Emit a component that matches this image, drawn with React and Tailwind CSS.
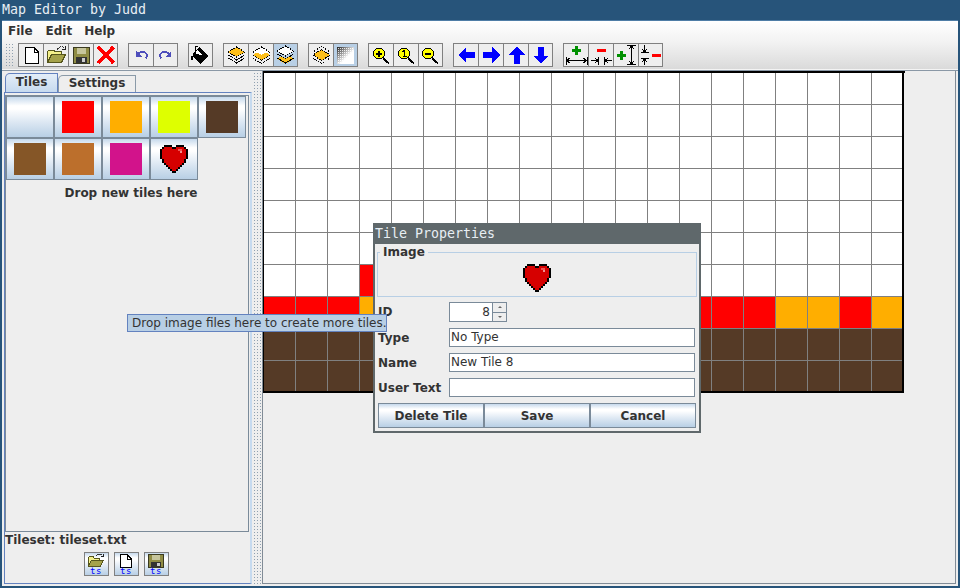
import React from "react";

const HEART = [
  "..KKKK..KKKK..",
  ".KRRRRKKRRRRK.",
  "KRRRRRRRRHHRRK",
  "KRRRRRRRRRPRRK",
  "KRRRRRRRRRRRRK",
  "KRRRRRRRRRRRRK",
  "KRRRRRRRRRRRRK",
  ".KRRRRRRRRRRK.",
  ".KRRRRRRRRRRK.",
  "..KRRRRRRRRK..",
  "...KRRRRRRK...",
  "....KRRRRK....",
  ".....KRRK.....",
  "......KK......",
];
const HC = { K: "#000", R: "#d60000", H: "#ee5555", P: "#f09090" };

function Heart() {
  return (
    <svg width="28" height="28" viewBox="0 0 14 14" shapeRendering="crispEdges" className="block">
      {HEART.flatMap((row, y) =>
        row.split("").map((c, x) => (c === "." ? null : <rect key={x + "-" + y} x={x} y={y} width="1" height="1" fill={HC[c]} />))
      )}
    </svg>
  );
}

const S = ({ children }) => (
  <svg width="23" height="22" viewBox="0 0 23 22" className="block" shapeRendering="crispEdges">
    {children}
  </svg>
);

const IconNew = () => (
  <S>
    <path d="M5.5 3.5H14L18.5 8V19.5H5.5Z" fill="#fff" stroke="#000" />
    <path d="M14 3.5V8H18.5" fill="none" stroke="#000" />
  </S>
);
const IconOpen = () => (
  <S>
    <path d="M2.5 18.5V7.5L4 6H9L10 7.5H16V10" fill="#f4f08a" stroke="#55551c" />
    <path d="M2.5 18.5L6.5 10.5H20.5L16.5 18.5Z" fill="#a5a24a" stroke="#55551c" />
    <path d="M12 5.5Q15 1.5 19 3.5" fill="none" stroke="#333" strokeDasharray="2 1" />
    <path d="M17 5.5H20.5V2" fill="none" stroke="#222" />
  </S>
);
const IconSave = () => (
  <S>
    <rect x="3.5" y="3.5" width="16" height="16" fill="#8f8c45" stroke="#3a3a20" />
    <rect x="7" y="4" width="9" height="6" fill="#c6c59c" />
    <rect x="6" y="13" width="11" height="6" fill="#333" />
    <rect x="12" y="14" width="3" height="4" fill="#ccc" />
  </S>
);
const IconX = () => (
  <S>
    <path d="M4 3L19.5 19M19.5 3L4 19" stroke="#f00" strokeWidth="3.6" />
  </S>
);
const IconUndo = () => (
  <S>
    <path d="M7 10.5Q11 6.5 15 8.5Q19 11 15.5 14.5" fill="none" stroke="#4d4dbb" strokeWidth="1.8" />
    <path d="M6 7V13H12Z" fill="#4d4dbb" />
  </S>
);
const IconRedo = () => (
  <S>
    <path d="M16 10.5Q12 6.5 8 8.5Q4 11 7.5 14.5" fill="none" stroke="#4d4dbb" strokeWidth="1.8" />
    <path d="M17 7V13H11Z" fill="#4d4dbb" />
  </S>
);
const IconBucket = () => (
  <S>
    <path d="M9 3Q7 1.5 6 3V9" fill="none" stroke="#000" strokeWidth="1" />
    <path d="M10 3L20 12L11 20L4 13V9Z" fill="#000" />
    <path d="M8 6L6.5 10L14 11Z" fill="#fff" />
    <path d="M3 11Q1 15 3 17Q5 15 3 11Z" fill="#000" />
  </S>
);
const Chev = ({ y, fill }) => (
  <path d={`M3 ${y}L11.5 ${y + 5}L20 ${y}L16 ${y - 2.5}L11.5 ${y}L7 ${y - 2.5}Z`} fill={fill} stroke="none" />
);
const LayerTop = () => (
  <S>
    <path d="M3 14L11.5 19L20 14M3 11L11.5 16L20 11" fill="none" stroke="#000" strokeWidth="1" strokeDasharray="1.6 .8" />
    <path d="M11.5 3L20 8L11.5 13L3 8Z" fill="#fdbf1a" stroke="#000" strokeDasharray="1.6 .8" />
  </S>
);
const LayerMid = () => (
  <S>
    <path d="M11.5 3L20 8L11.5 13L3 8Z" fill="#fff" stroke="#000" strokeDasharray="1.6 .8" />
    <path d="M3 11L11.5 16L20 11" fill="none" stroke="#000" />
    <Chev y={11} fill="#fdbf1a" />
    <path d="M3 14.5L11.5 19.5L20 14.5" fill="none" stroke="#000" strokeDasharray="1.6 .8" />
  </S>
);
const LayerBot = () => (
  <S>
    <path d="M11.5 2L20 7L11.5 12L3 7Z" fill="#fff" stroke="#000" strokeDasharray="1.6 .8" />
    <path d="M3 10L11.5 15L20 10" fill="none" stroke="#000" strokeDasharray="1.6 .8" />
    <Chev y={15} fill="#fdbf1a" />
    <path d="M3 14L11.5 19L20 14" fill="none" stroke="#000" />
  </S>
);
const LayerOne = () => (
  <S>
    <path d="M11.5 2.5L20 8M11.5 2.5L3 8M3 14L11.5 19.5L20 14" fill="none" stroke="#000" strokeDasharray="1 1" />
    <path d="M11.5 5.5L20 11L11.5 16.5L3 11Z" fill="#fdbf1a" stroke="#000" strokeDasharray="1.4 1" />
  </S>
);
const IconGrid = () => {
  const cells = [];
  for (let y = 0; y < 8; y++)
    for (let x = 0; x < 8; x++) {
      const g = Math.min(255, 215 + (x + y) * 6);
      cells.push(<rect key={x + "," + y} x={4 + x * 2} y={4 + y * 2} width="1" height="1" fill={`rgb(${g},${g},${g})`} />);
    }
  return (
    <S>
      <defs>
        <linearGradient id="gridfade" x1="0" y1="0" x2="1" y2="1">
          <stop offset="0" stopColor="#222222" />
          <stop offset="0.6" stopColor="#ffffff" />
          <stop offset="1" stopColor="#ffffff" />
        </linearGradient>
      </defs>
      <rect x="3" y="3" width="17" height="17" fill="url(#gridfade)" />
      {cells}
    </S>
  );
};
const Zoom = ({ mark }) => (
  <S>
    <path d="M13 14L19 19.5" stroke="#000" strokeWidth="2" />
    <circle cx="9" cy="9.5" r="5.5" fill="#ffff00" stroke="#000" strokeWidth="1" />
    {mark === "+" && <path d="M6 9.5H12M9 6.5V12.5" stroke="#000" strokeWidth="2" />}
    {mark === "-" && <path d="M6 9.5H12" stroke="#000" strokeWidth="2" />}
    {mark === "1" && <path d="M7.5 7.5L9.5 6.5V12.5M7.5 12.5H11.5" stroke="#000" strokeWidth="1.4" fill="none" />}
  </S>
);
const Arrow = ({ d }) => {
  const rot = { l: 0, r: 180, u: 90, d: 270 }[d];
  return (
    <S>
      <path transform={`rotate(${rot} 11.5 11)`} d="M3 11L11 3V8H20V14H11V19Z" fill="#0000ff" />
    </S>
  );
};
const Plus = ({ x, y, c = "#009000" }) => <path d={`M${x - 4.5} ${y}H${x + 4.5}M${x} ${y - 4.5}V${y + 4.5}`} stroke={c} strokeWidth="3" />;
const Minus = ({ x, y }) => <path d={`M${x - 4.5} ${y}H${x + 4.5}`} stroke="#f00" strokeWidth="3" />;
const WidenPlus = () => (
  <S>
    <Plus x={11.5} y={6} />
    <path d="M1 12.5V21M22 12.5V21M1.5 16.5H21.5M5 14L1.5 16.5L5 19M18 14L21.5 16.5L18 19" fill="none" stroke="#000" />
  </S>
);
const WidenMinus = () => (
  <S>
    <Minus x={11.5} y={6} />
    <path d="M8.5 12.5V21M14.5 12.5V21M1 16.5H8M8 16.5L5 14M8 16.5L5 19M15 16.5H22M15 16.5L18 14M15 16.5L18 19" fill="none" stroke="#000" />
  </S>
);
const TallPlus = () => (
  <S>
    <Plus x={6} y={11} />
    <path d="M12 1.5H21M12 20.5H21M16.5 2V20M14 5L16.5 2L19 5M14 17L16.5 20L19 17" fill="none" stroke="#000" />
  </S>
);
const TallMinus = () => (
  <S>
    <Minus x={17.5} y={11} />
    <path d="M1.5 8.5H10M1.5 14.5H10M5.5 1V8M5.5 8L3 5M5.5 8L8 5M5.5 15V21M5.5 15L3 18M5.5 15L8 18" fill="none" stroke="#000" />
  </S>
);

function Group({ items, mr }) {
  return (
    <div className={`flex ${mr}`}>
      {items.map((it, i) => (
        <div
          key={i}
          className={`h-[24px] w-[25px] flex items-center justify-center border-y border-l border-[#808080] box-border ${
            i === items.length - 1 ? "border-r" : ""
          } ${it.on ? "bg-[#b8cfe5]" : "bg-[#eeeeee]"}`}
        >
          {it.i}
        </div>
      ))}
    </div>
  );
}

const BTN = "bg-[linear-gradient(180deg,#c6d9ec_0%,#ffffff_22%,#ffffff_30%,#dde8f3_62%,#b8cfe5_100%)]";

function Tile({ c, children }) {
  return (
    <div className={`w-[48px] h-[42px] box-border border border-[#7a8a99] flex items-center justify-center ${BTN}`}>
      {c ? <div className="w-[32px] h-[32px]" style={{ background: c }} /> : children}
    </div>
  );
}

function TsBtn({ children }) {
  return (
    <div className={`w-[25px] h-[24px] box-border border border-[#808080] relative flex justify-center overflow-hidden ${BTN}`}>
      <svg width="18" height="16" viewBox="0 0 18 16" className="block" shapeRendering="crispEdges">{children}</svg>
      <span className="absolute bottom-[-1px] left-0 right-0 text-center text-[9px] leading-[10px] text-[#0000ff] font-['DejaVu_Sans_Mono',monospace] tracking-[0.5px]">ts</span>
    </div>
  );
}

const Field = ({ label, value, children, h = "h-[19px]" }) => (
  <div className={`flex items-center ${h} mb-[6px]`}>
    <div className="w-[71px] text-[12px] font-bold text-[#333] leading-none">{label}</div>
    {children || (
      <div className="w-[246px] h-[19px] box-border border border-[#7a8a99] bg-white pl-[1px] text-[12px] leading-[17px] text-[#333]">{value}</div>
    )}
  </div>
);

const COLS = 20;
function cellColor(r, c) {
  if (r >= 8) return "#553a26";
  if (r === 7) {
    if (c === 3) return "#ffae00";
    if (c <= 15 || c === 18) return "#ff0000";
    return "#ffae00";
  }
  if (r === 6 && c === 3) return "#ff0000";
  return "#ffffff";
}

export default function App() {
  const cells = [];
  for (let r = 0; r < 10; r++)
    for (let c = 0; c < COLS; c++)
      cells.push(
        <div
          key={r + "-" + c}
          className="w-[32px] h-[32px] box-border border-r border-b border-[#808080]"
          style={{ background: cellColor(r, c) }}
        />
      );

  return (
    <div className="relative w-[960px] h-[588px] flex flex-col overflow-hidden bg-[#27547a] font-['DejaVu_Sans',sans-serif] text-[#333]">
      <div className="h-[20px] pl-[2px] text-[13.3px] leading-[19px] text-[#e8eef4] font-['DejaVu_Sans_Mono',monospace] whitespace-nowrap">Map Editor by Judd</div>
      <div className="flex-1 min-h-0 mx-[2px] mb-[2px] flex flex-col bg-[#eeeeee] border-t border-[#4f7da6]">
        <div className="h-[48px] flex flex-col bg-[linear-gradient(180deg,#ffffff_0%,#f2f2f2_45%,#dadada_100%)]">
          <div className="h-[19px] flex items-center pl-[6px] gap-[13px] text-[12px] font-bold text-[#333]">
            <span>File</span>
            <span>Edit</span>
            <span className="-ml-px">Help</span>
          </div>
          <div className="flex items-start pl-[3px] pt-[3px]">
            <div className="w-[9px] h-[24px] mr-[4px] bg-[radial-gradient(#8fa0b0_0.8px,transparent_0.9px)] bg-[length:3px_3px]" />
            <Group mr="mr-[10px]" items={[{ i: <IconNew /> }, { i: <IconOpen /> }, { i: <IconSave /> }, { i: <IconX /> }]} />
            <Group mr="mr-[10px]" items={[{ i: <IconUndo /> }, { i: <IconRedo /> }]} />
            <Group mr="mr-[10px]" items={[{ i: <IconBucket /> }]} />
            <Group mr="mr-[10px]" items={[{ i: <LayerTop /> }, { i: <LayerMid /> }, { i: <LayerBot />, on: true }]} />
            <Group mr="mr-[10px]" items={[{ i: <LayerOne /> }, { i: <IconGrid />, on: true }]} />
            <Group mr="mr-[10px]" items={[{ i: <Zoom mark="+" /> }, { i: <Zoom mark="1" /> }, { i: <Zoom mark="-" /> }]} />
            <Group mr="mr-[10px]" items={[{ i: <Arrow d="l" /> }, { i: <Arrow d="r" /> }, { i: <Arrow d="u" /> }, { i: <Arrow d="d" /> }]} />
            <Group mr="" items={[{ i: <WidenPlus /> }, { i: <WidenMinus /> }, { i: <TallPlus /> }, { i: <TallMinus /> }]} />
          </div>
        </div>
        <div className="h-[1px] bg-[#f4f4f4]" />
        <div className="h-[1px] bg-[#8a98a6]" />
        <div className="flex-1 min-h-0 flex">
          {/* left */}
          <div className="w-[251px] flex flex-col pl-[2px] pr-[1px] pt-[2px] pb-[2px]">
            <div className="flex h-[19px] items-end pl-[1px] relative z-10 text-[12px] font-bold text-[#333]">
              <div className="w-[53px] h-[19px] box-border border border-b-0 border-[#6382bf] rounded-tl-[5px] bg-[linear-gradient(180deg,#e4eef8,#c6daef)] text-center leading-[17px]">Tiles</div>
              <div className="w-[78px] h-[17px] box-border border border-b-0 border-[#8a9aa8] rounded-tl-[5px] text-center leading-[15px]">Settings</div>
            </div>
            <div className="flex-1 min-h-0 flex flex-col box-border border border-[#6382bf] border-r-2 border-r-[#c6daef] pt-[2px] pb-[1px]">
              <div className="flex-1 min-h-0 box-border border border-[#7a8a99] mr-[1px] flex flex-col">
                <div className="flex flex-wrap w-[242px]">
                  <Tile c="transparent" />
                  <Tile c="#ff0000" />
                  <Tile c="#ffae00" />
                  <Tile c="#deff00" />
                  <Tile c="#553a26" />
                  <Tile c="#855627" />
                  <Tile c="#bc6f2c" />
                  <Tile c="#d2138b" />
                  <Tile><Heart /></Tile>
                </div>
                <div className="text-center text-[12px] font-bold text-[#333] leading-[16px] mt-[5px] pl-[8px]">Drop new tiles here</div>
              </div>
              <div className="h-[17px] text-[12px] font-bold text-[#333] leading-[17px]">Tileset: tileset.txt</div>
              <div className="flex justify-center gap-[5px] pt-[3px] pb-[6px] pr-[3px] h-[33px] box-border">
                <TsBtn>
                  <path d="M1.5 13V4.5L2.5 3.5H6L7 5H12V7" fill="#f4f08a" stroke="#55551c" />
                  <path d="M1.5 13L4.5 7H16.5L13.5 13Z" fill="#a5a24a" stroke="#55551c" />
                  <path d="M9 3Q12 0 15 2" fill="none" stroke="#333" />
                  <path d="M13.5 3.5H16V1" fill="none" stroke="#222" />
                </TsBtn>
                <TsBtn>
                  <path d="M3.5 1.5H10L14.5 6V14.5H3.5Z" fill="#fff" stroke="#000" />
                  <path d="M10 1.5V6H14.5" fill="none" stroke="#000" />
                </TsBtn>
                <TsBtn>
                  <rect x="1.5" y="1" width="15" height="13.5" fill="#8f8c45" stroke="#3a3a20" />
                  <rect x="4.5" y="1.5" width="8" height="5" fill="#c6c59c" />
                  <rect x="4" y="9" width="10" height="5" fill="#333" />
                  <rect x="10" y="10" width="3" height="3" fill="#ccc" />
                </TsBtn>
              </div>
            </div>
          </div>
          {/* splitter */}
          <div className="w-[9px] bg-[radial-gradient(#8fa0b0_0.8px,transparent_0.9px)] bg-[length:3px_3px] bg-center my-[2px]" />
          {/* canvas */}
          <div className="flex-1 min-w-0 box-border border-x border-b border-[#808b96] mb-[2px] mr-[2px]">
            <div className="w-[641px] border-t-2 border-l border-black box-content">
              <div className="grid grid-cols-[repeat(20,32px)] w-[640px] h-[320px] border-r-2 border-b-2 border-black box-border overflow-hidden">{cells}</div>
            </div>
          </div>
        </div>
      </div>

      {/* dialog */}
      <div className="absolute left-[373px] top-[223px] w-[328px] h-[210px] box-border border-2 border-[#5f686b] bg-[#eeeeee] flex flex-col">
        <div className="h-[20px] -mt-px shrink-0 bg-[#5f686b] text-[13.3px] leading-[19px] text-[#e8eef4] font-['DejaVu_Sans_Mono',monospace]">Tile Properties</div>
        <div className="px-[2px] pt-[8px]">
          <div className="relative w-[320px] h-[45px] box-border border border-[#b8cfe5] flex justify-center pt-[11px] pr-[1px]">
            <span className="absolute left-[2px] top-[-7px] px-[3px] bg-[#eeeeee] text-[12px] font-bold leading-[13px] text-[#333]">Image</span>
            <Heart />
          </div>
        </div>
        <div className="pl-[3px] pt-[5px]">
          <Field label="ID" h="h-[20px]">
            <div className="flex w-[58px] h-[20px] box-border">
              <div className="w-[43px] box-border border border-r-0 border-[#7a8a99] bg-white text-right pr-[2px] text-[12px] leading-[18px] text-[#333]">8</div>
              <div className="w-[15px] flex flex-col box-border border border-[#7a8a99]">
                <div className="flex-1 flex items-center justify-center border-b border-[#7a8a99]">
                  <div className="w-0 h-0 border-x-[2px] border-x-transparent border-b-[2px] border-b-[#666]" />
                </div>
                <div className="flex-1 flex items-center justify-center">
                  <div className="w-0 h-0 border-x-[2px] border-x-transparent border-t-[2px] border-t-[#666]" />
                </div>
              </div>
            </div>
          </Field>
          <Field label="Type" value="No Type" />
          <Field label="Name" value="New Tile 8" />
          <Field label="User Text" value="" />
        </div>
        <div className="flex pl-[3px] text-[12px] font-bold text-[#333]">
          {["Delete Tile", "Save", "Cancel"].map((t) => (
            <div key={t} className={`w-[106px] h-[25px] box-border border border-[#7a8a99] text-center leading-[25px] ${BTN}`}>{t}</div>
          ))}
        </div>
      </div>

      {/* tooltip */}
      <div className="absolute left-[127px] top-[314px] w-[260px] h-[18px] box-border border border-[#6382bf] bg-[#b8cfe5] pl-[4px] text-[12px] leading-[16px] text-[#333] whitespace-nowrap">Drop image files here to create more tiles.</div>
    </div>
  );
}
